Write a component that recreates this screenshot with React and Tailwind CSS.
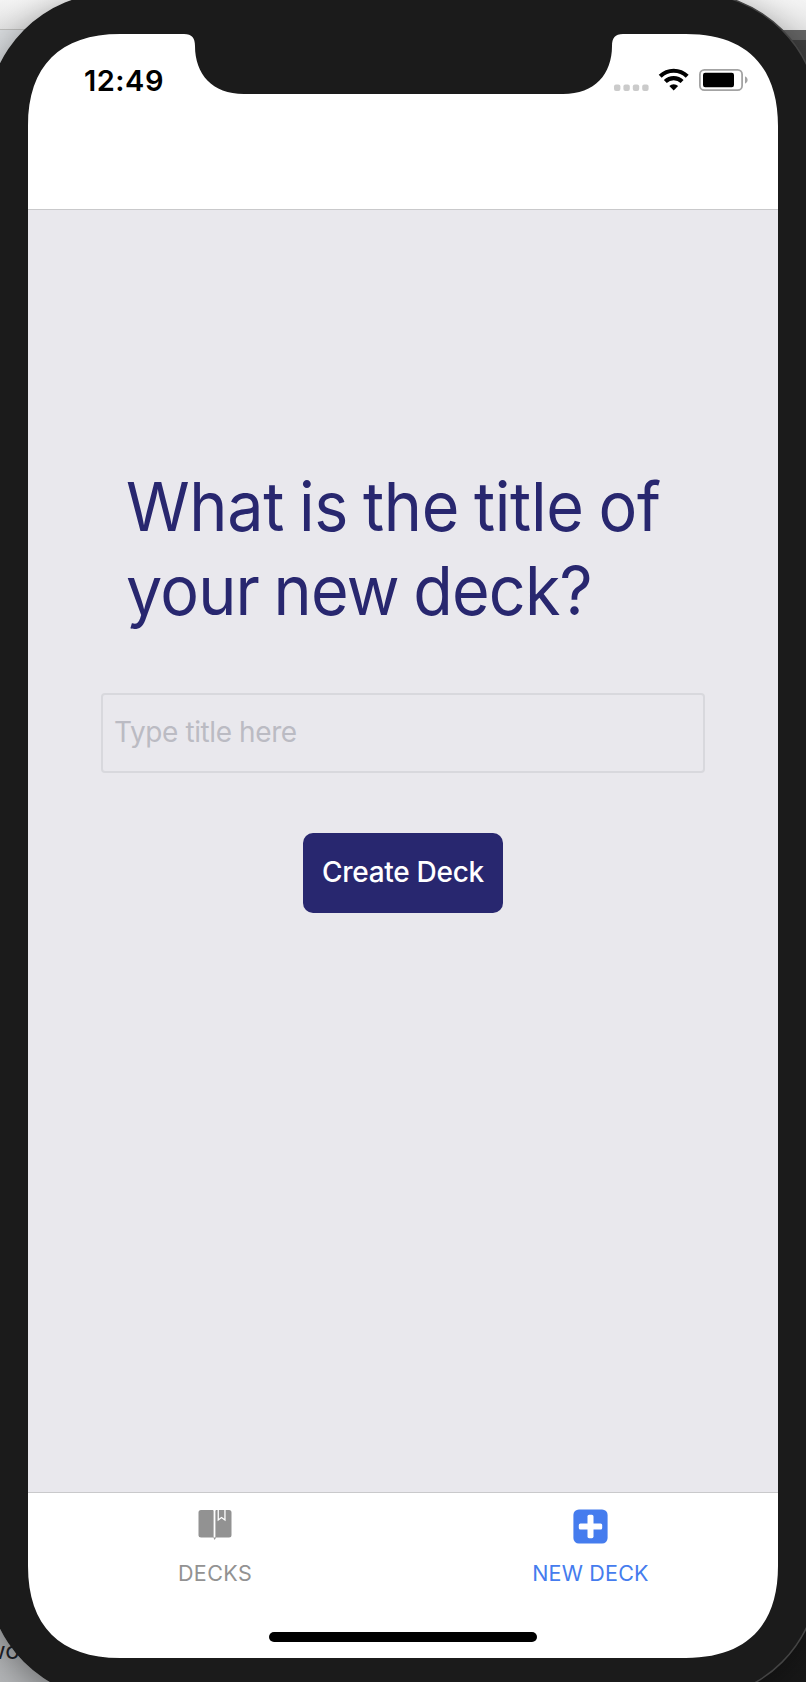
function Desktop() {
  return (
    <div className="absolute inset-0 flex overflow-hidden">
      <div className="flex w-1/2 flex-col">
        <div className="h-[30px] border-b border-[#bdbdbb] bg-linear-to-b from-[#f4f4f4] to-[#e4e4e4]" />
        <div className="flex flex-1 flex-col justify-end bg-linear-to-b from-[#d9dcdf] to-[#b4b6b8]">
          <div className="-ml-[14px] h-[47px] text-[24px] leading-[32px] text-[#1f2228]">wo</div>
        </div>
      </div>
      <div className="flex w-1/2 flex-col">
        <div className="h-[30px] bg-linear-to-b from-[#f4f4f4] to-[#e8e8e8]" />
        <div className="h-[10px] bg-[#666666]" />
        <div className="flex-1 bg-linear-to-b from-[#404040] to-[#181818]" />
      </div>
    </div>
  );
}

function Bezel() {
  return (
    <svg className="pointer-events-none absolute inset-0" width="806" height="1682" viewBox="0 0 806 1682">
      <path
        d="M-13 119 A126 126 0 0 1 113 -7 H693 A126 126 0 0 1 819 119 V1573 A126 126 0 0 1 693 1699 H113 A126 126 0 0 1 -13 1573 Z
           M28 126 V1566 C28 1626 60 1658 120 1658 H686 C746 1658 778 1626 778 1566 V126 C778 66 746 34 686 34 H623 C615 34 612 38 612 46 C612 74 595 94 563 94 H244 C212 94 195 74 195 46 C195 38 192 34 184 34 H120 C60 34 28 66 28 126 Z"
        fill="#1b1b1b"
        fillRule="evenodd"
      />
      <path d="M693 -7 A126 126 0 0 1 819 119 V1573 A126 126 0 0 1 693 1699" fill="none" stroke="#444" strokeWidth="1.5" />
    </svg>
  );
}

function StatusBar() {
  return (
    <div className="flex h-[92px] items-center justify-between pr-[29px] pl-[56px]">
      <span className="text-[29px] leading-none font-semibold tracking-[0.5px] text-black">12:49</span>
      <svg width="136" height="24" viewBox="614 68 136 24">
        <g fill="#cbcbcb">
          <rect x="615" y="84.5" width="6.4" height="6.4" rx="2" />
          <rect x="624.4" y="84.5" width="6.4" height="6.4" rx="2" />
          <rect x="633.8" y="84.5" width="6.4" height="6.4" rx="2" />
          <rect x="643.2" y="84.5" width="6.4" height="6.4" rx="2" />
        </g>
        <g fill="none" stroke="#000" strokeWidth="4.2">
          <path d="M661.2 76.2 A19.4 19.4 0 0 1 688.2 76.2" />
          <path d="M666.3 81.6 A12 12 0 0 1 683.1 81.6" />
        </g>
        <path d="M674.7 90.6 L670.3 86 A6.4 6.4 0 0 1 679.1 86 Z" />
        <rect x="700.9" y="69.9" width="42.2" height="20.3" rx="4.5" fill="none" stroke="#a3a3a3" strokeWidth="1.8" />
        <rect x="704" y="72.8" width="31" height="14.5" rx="2.2" />
        <path d="M746 76.2 Q748.7 77.4 748.7 80 Q748.7 82.6 746 83.8 Z" fill="#a3a3a3" />
      </svg>
    </div>
  );
}

function BookIcon() {
  return (
    <svg width="34" height="32" viewBox="0 0 34 32">
      <path
        d="M3 1 H14.6 Q15.6 1 15.6 2 V28.5 H3 Q.5 28.5 .5 26.5 V3.5 Q.5 1 3 1 Z
           M18.4 1 H19.6 V12.2 L23.5 9.2 L27.6 12.2 V1 H31 Q33.5 1 33.5 3.5 V26 Q33.5 28.5 31 28.5 H17.4 V2 Q17.4 1 18.4 1 Z
           M20.9 1 H26.3 V9.7 L23.5 7.7 L20.9 9.7 Z
           M15.3 28.5 H18 L16.7 31 Z"
        fill="#929292"
      />
    </svg>
  );
}

function PlusIcon() {
  return (
    <svg width="35" height="35" viewBox="0 0 35 35">
      <rect x=".4" y=".4" width="34.2" height="34.2" rx="5.5" fill="#457cee" />
      <g fill="#fff">
        <rect x="14.5" y="5.8" width="6" height="23.4" rx="1.6" />
        <rect x="5.8" y="14.5" width="23.4" height="6" rx="1.6" />
      </g>
    </svg>
  );
}

export default function App() {
  return (
    <div className="relative h-[1682px] w-[806px] overflow-hidden font-[Inter,sans-serif]">
      <Desktop />
      <div className="absolute -inset-x-[13px] top-[-7px] bottom-[-17px] rounded-[126px] shadow-[0_8px_36px_rgba(0,0,0,0.4)]" />
      <div className="relative px-7 py-[34px]">
        <div className="flex h-[1624px] flex-col overflow-hidden rounded-[66px] bg-white">
          <header className="h-[176px] border-b border-[#c9c9cb]">
            <StatusBar />
          </header>
          <main className="flex flex-1 flex-col items-center bg-[#e9e8ed]">
            <h1 className="mt-[254px] h-[169px] w-[554px] text-[68px] leading-[84px] font-normal whitespace-nowrap text-[#28276f]">
              <span className="block origin-left scale-x-95 tracking-[-0.35px] [word-spacing:-3px]">What is the title of</span>
              <span className="block origin-left scale-x-95 tracking-[-0.85px] [word-spacing:-3px]">your new deck?</span>
            </h1>
            <input
              className="mt-[60px] h-20 w-[604px] rounded-[4px] border-2 border-[#d8d8dd] bg-transparent px-[11px] pb-[2px] text-[28px] tracking-[-0.4px] placeholder:text-[#bbbbc3]"
              placeholder="Type title here"
            />
            <button className="mt-[60px] h-20 w-[200px] rounded-[10px] bg-[#28276f] pb-[2px] text-[28px] font-[450] tracking-[-0.3px] whitespace-nowrap text-white">
              Create Deck
            </button>
          </main>
          <nav className="flex h-[166px] border-t border-[#c9c9cb] bg-white text-[21.5px] leading-none">
            <div className="flex w-1/2 flex-col items-center pt-4 pr-px text-[#929292]">
              <div className="h-[54px]"><BookIcon /></div>
              <span className="tracking-[0.4px]">DECKS</span>
            </div>
            <div className="flex w-1/2 flex-col items-center pt-4 text-[#457cee]">
              <div className="h-[54px]"><PlusIcon /></div>
              <span className="tracking-[0.2px]">NEW DECK</span>
            </div>
          </nav>
        </div>
      </div>
      <Bezel />
      <div className="absolute top-[1632px] left-[269px] h-[10px] w-[268px] rounded-full bg-black" />
    </div>
  );
}
